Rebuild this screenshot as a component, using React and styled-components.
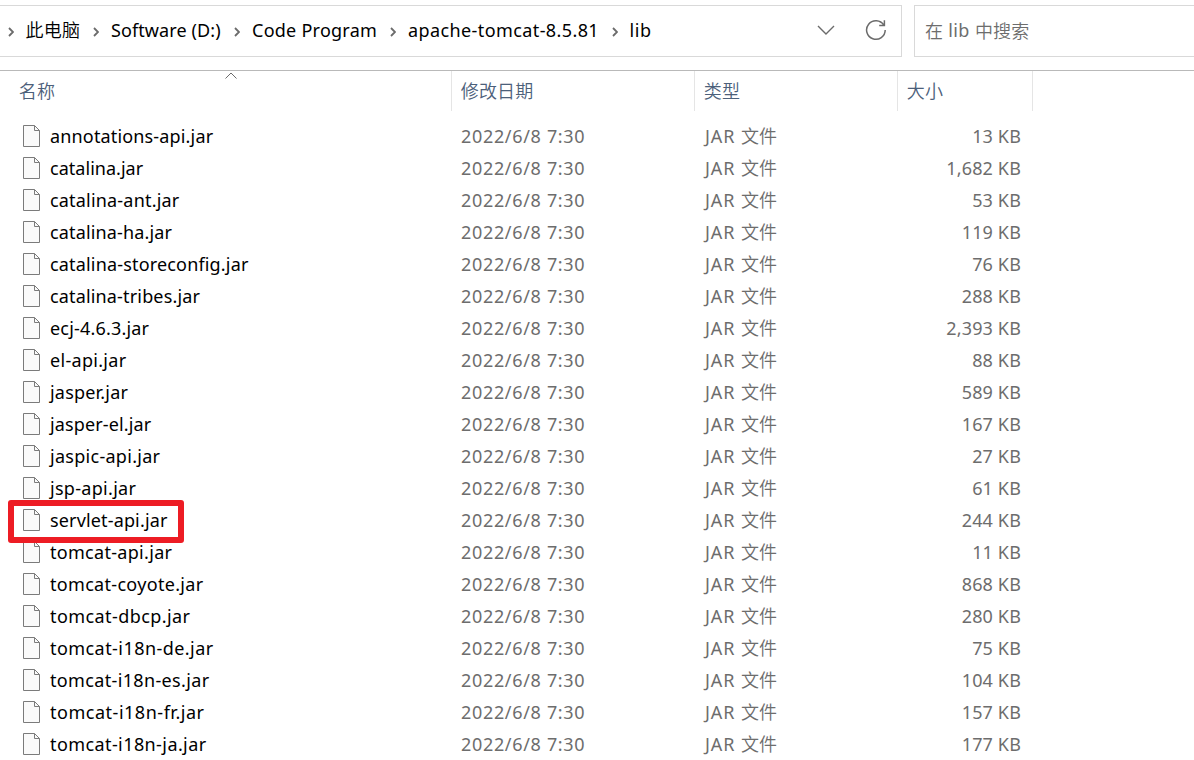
import React from "react";
import styled, { createGlobalStyle } from "styled-components";

const Global = createGlobalStyle`
  * { box-sizing: border-box; }
  body {
    margin: 0;
    background: #fff;
    font-family: "Noto Sans", "Noto Sans CJK SC", sans-serif;
    font-size: 18px;
    overflow: hidden;
  }
`;

const Window = styled.div`
  width: 1194px;
  height: 760px;
  overflow: hidden;
  background: #fff;
`;

const TopBar = styled.div`
  display: flex;
  gap: 12px;
  padding-top: 5px;
  height: 70px;
`;

const AddressBar = styled.div`
  display: flex;
  align-items: center;
  width: 902px;
  height: 52px;
  border: 1px solid #d9d9d9;
  border-left: 0;
  color: #000;
`;

const Crumb = styled.span`
  width: ${(p) => p.$width}px;
  line-height: 26px;
  margin-top: -3px;
  white-space: nowrap;
  letter-spacing: ${(p) => p.$track || 0}px;
`;

const Han = styled.span`
  font-family: "Noto Sans CJK SC", sans-serif;
  font-weight: 350;
  letter-spacing: 0.2px;
`;

const Separator = styled.svg`
  flex: none;
  width: 6px;
  height: 10px;
  margin: 2px 12px 0 ${(p) => p.$before}px;
`;

const Actions = styled.div`
  display: flex;
  align-items: center;
  gap: 30px;
  margin-left: auto;
  padding: 0 14px 2px 0;
`;

const SearchBox = styled.div`
  display: flex;
  align-items: center;
  flex: 1;
  height: 52px;
  padding: 0 0 2px 10px;
  border: 1px solid #d9d9d9;
  border-right: 0;
  color: #6d6d6d;
  white-space: pre;
  letter-spacing: 0.4px;
`;

const COLUMNS = "452px 243px 203px 135px";

const Header = styled.div`
  display: grid;
  grid-template-columns: ${COLUMNS};
  height: 41px;
  border-top: 1px solid #b9b9b9;
`;

const HeaderCell = styled.div`
  position: relative;
  padding-left: ${(p) => p.$indent}px;
  border-right: 1px solid #e5e5e5;
  line-height: 40px;
  color: #4c607a;
  font-weight: 350;
  letter-spacing: 0.2px;
`;

const SortMark = styled.svg`
  position: absolute;
  left: 224.5px;
  top: 1px;
`;

const List = styled.div`
  position: relative;
  padding-top: 9px;
`;

const Row = styled.div`
  display: grid;
  grid-template-columns: ${COLUMNS};
  height: 32px;
  line-height: 32px;
  white-space: nowrap;
`;

const NameCell = styled.div`
  display: flex;
  align-items: center;
  gap: 10px;
  padding-left: 23px;
  color: #000;
`;

const FileName = styled.span`
  letter-spacing: ${(p) => p.$track}px;
`;

const MetaCell = styled.div`
  height: 32px;
  padding-left: ${(p) => p.$indent}px;
  color: #6d6d6d;
  letter-spacing: ${(p) => p.$track}px;

  ${Han} {
    line-height: 1;
  }
`;

const SizeCell = styled(MetaCell)`
  padding: 0 12px 0 0;
  text-align: right;
`;

const Highlight = styled.div`
  position: absolute;
  left: 8px;
  top: 389px;
  width: 176px;
  height: 43px;
  border: 6px solid #ed1c24;
  border-radius: 3px;
`;

const FileIcon = () => (
  <svg width="17" height="22" viewBox="0 0 17 22">
    <path d="M.5.5h11l5 5v16H.5z" fill="#fafafa" stroke="#7b7b7b" />
    <path d="M11.5.5v5h5" fill="none" stroke="#7b7b7b" />
  </svg>
);

const Chevron = ({ before }) => (
  <Separator $before={before} viewBox="0 0 6 10">
    <path d="M1 1l4 4-4 4" fill="none" stroke="#6b6b6b" strokeWidth="1.8" />
  </Separator>
);

const crumbs = [
  { text: <Han>此电脑</Han>, before: 7.5, width: 55.5, track: 0 },
  { text: "Software (D:)", before: 12, width: 111, track: 0.1 },
  { text: "Code Program", before: 12, width: 126, track: 0.25 },
  { text: "apache-tomcat-8.5.81", before: 12, width: 191, track: 0.4 },
  { text: "lib", before: 12.5, width: 24, track: 0.6 },
];

const files = [
  ["annotations-api.jar", "13 KB", 0.16],
  ["catalina.jar", "1,682 KB", 0.03],
  ["catalina-ant.jar", "53 KB", 0.19],
  ["catalina-ha.jar", "119 KB", 0.15],
  ["catalina-storeconfig.jar", "76 KB", 0.17],
  ["catalina-tribes.jar", "288 KB", 0.16],
  ["ecj-4.6.3.jar", "2,393 KB", 0.19],
  ["el-api.jar", "88 KB", 0.3],
  ["jasper.jar", "589 KB", 0.2],
  ["jasper-el.jar", "167 KB", 0.13],
  ["jaspic-api.jar", "27 KB", 0.28],
  ["jsp-api.jar", "61 KB", 0.3],
  ["servlet-api.jar", "244 KB", 0.15],
  ["tomcat-api.jar", "11 KB", 0.3],
  ["tomcat-coyote.jar", "868 KB", 0.31],
  ["tomcat-dbcp.jar", "280 KB", 0.42],
  ["tomcat-i18n-de.jar", "75 KB", 0.44],
  ["tomcat-i18n-es.jar", "104 KB", 0.35],
  ["tomcat-i18n-fr.jar", "157 KB", 0.52],
  ["tomcat-i18n-ja.jar", "177 KB", 0.41],
];

export default function App() {
  return (
    <Window>
      <Global />
      <TopBar>
        <AddressBar>
          {crumbs.map((c, i) => (
            <React.Fragment key={i}>
              <Chevron before={c.before} />
              <Crumb $width={c.width} $track={c.track}>{c.text}</Crumb>
            </React.Fragment>
          ))}
          <Actions>
            <svg width="18" height="10" viewBox="0 0 18 10">
              <path d="M1 1l8 8 8-8" fill="none" stroke="#6b6b6b" strokeWidth="1.4" />
            </svg>
            <svg width="22" height="22" viewBox="0 0 22 22" fill="none" stroke="#6b6b6b" strokeWidth="1.5">
              <path d="M20.200 11a9.300 9.300 0 1 1-1.400-4.900M19.400 1.200v5.200h-5.200" />
            </svg>
          </Actions>
        </AddressBar>
        <SearchBox>
          <Han>在</Han> lib <Han>中搜索</Han>
        </SearchBox>
      </TopBar>
      <Header>
        <HeaderCell $indent={18.7}>
          名称
          <SortMark width="12" height="7" viewBox="0 0 12 7">
            <path d="M.5 6.500L6 1l5.500 5.500" fill="none" stroke="#6b6b6b" />
          </SortMark>
        </HeaderCell>
        <HeaderCell $indent={8.7}>修改日期</HeaderCell>
        <HeaderCell $indent={8.7}>类型</HeaderCell>
        <HeaderCell $indent={8.7}>大小</HeaderCell>
      </Header>
      <List>
        {files.map(([name, size, track]) => (
          <Row key={name}>
            <NameCell>
              <FileIcon />
              <FileName $track={track}>{name}</FileName>
            </NameCell>
            <MetaCell $indent={9} $track={0.67}>2022/6/8 7:30</MetaCell>
            <MetaCell $indent={10} $track={0.9}>
              JAR <Han>文件</Han>
            </MetaCell>
            <SizeCell $track={0.15}>{size}</SizeCell>
          </Row>
        ))}
        <Highlight />
      </List>
    </Window>
  );
}
